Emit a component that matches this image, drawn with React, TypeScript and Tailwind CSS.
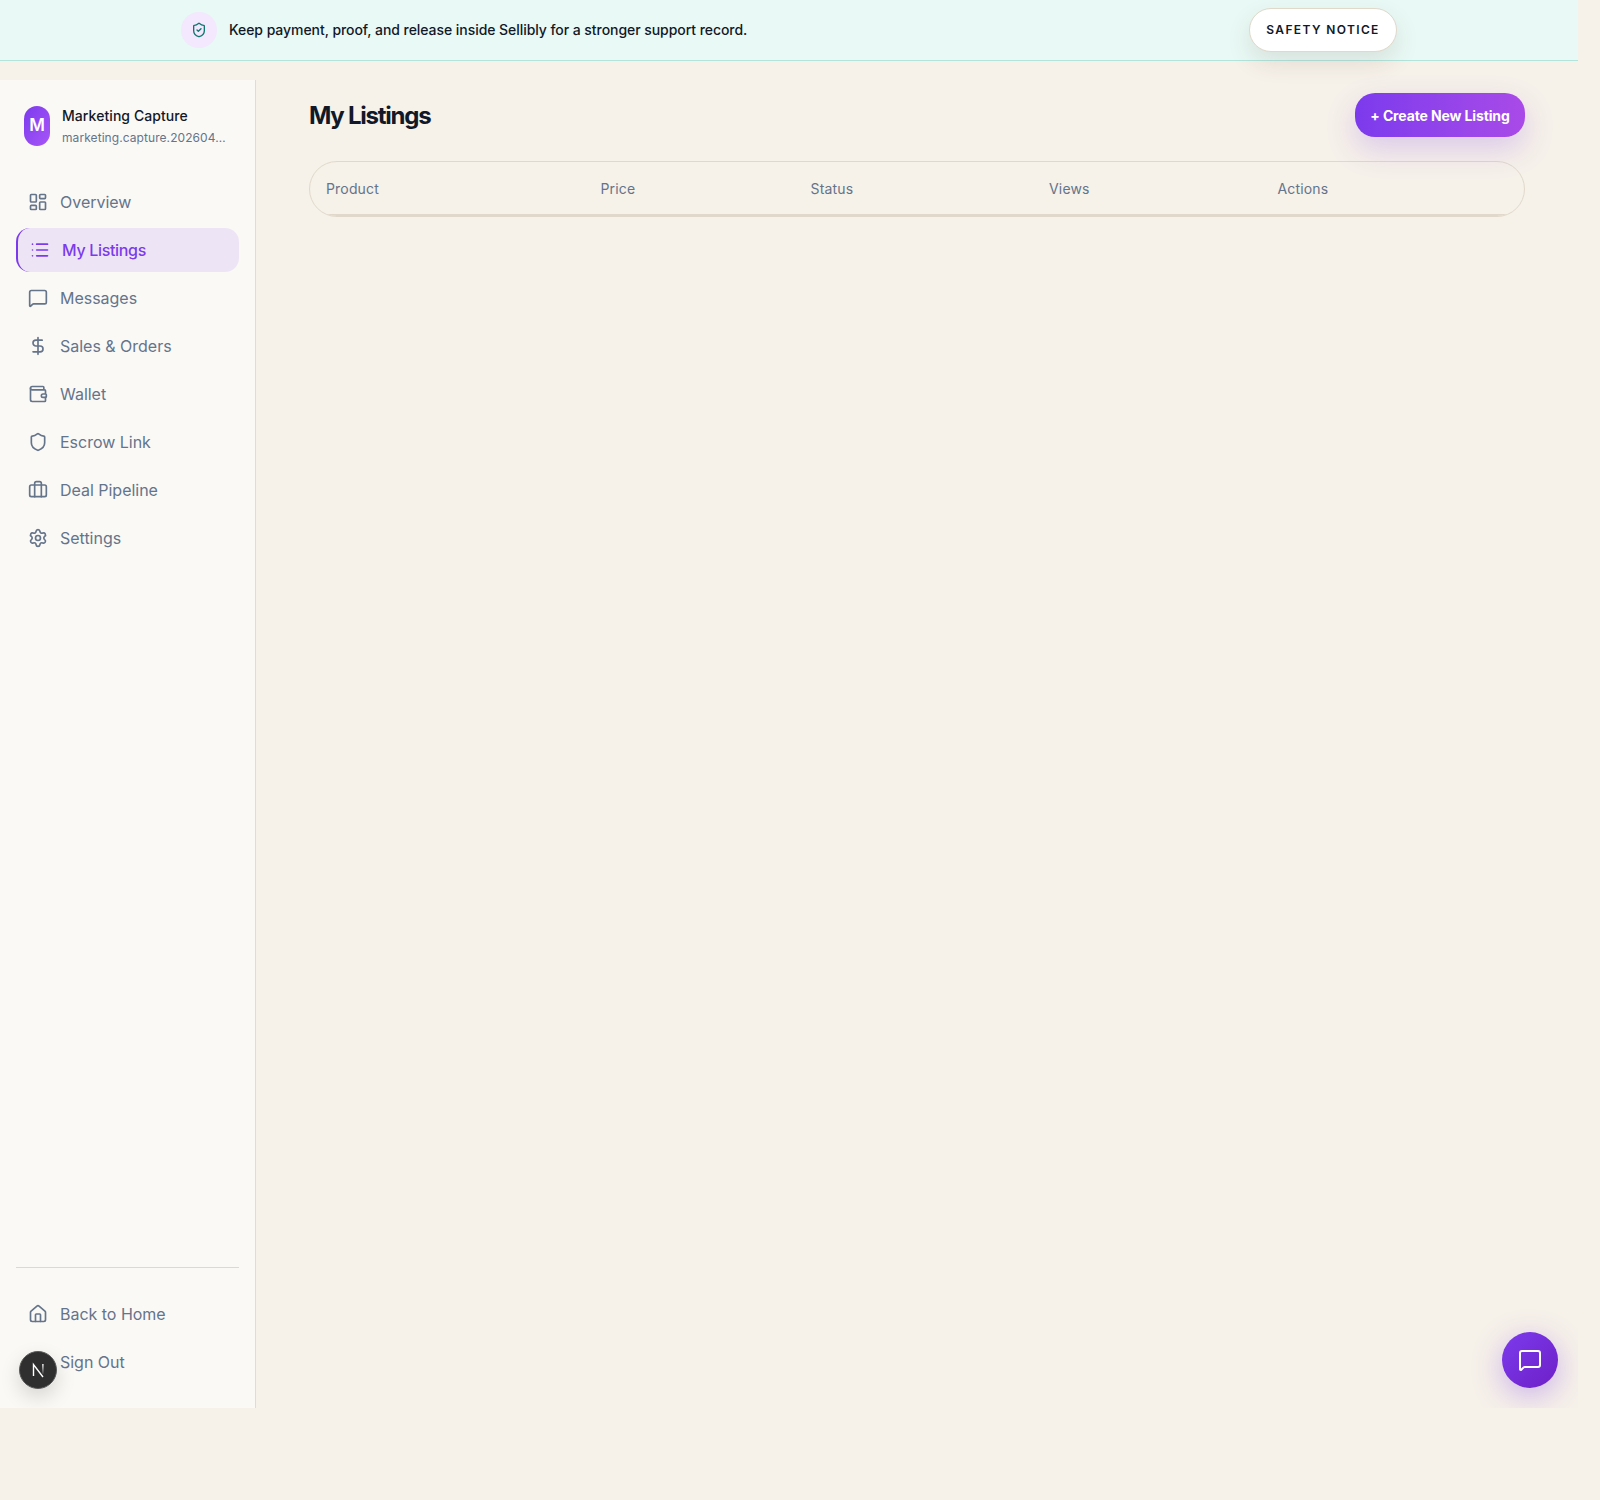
import { LayoutDashboard, List, MessageSquare, DollarSign, Wallet, Shield, Briefcase, Settings, Home, LogOut, ShieldCheck } from "lucide-react";

const font = { fontFamily: '"Inter", "Liberation Sans", sans-serif' };

const nav = [
  { label: "Overview", Icon: LayoutDashboard },
  { label: "My Listings", Icon: List, active: true },
  { label: "Messages", Icon: MessageSquare },
  { label: "Sales & Orders", Icon: DollarSign },
  { label: "Wallet", Icon: Wallet },
  { label: "Escrow Link", Icon: Shield },
  { label: "Deal Pipeline", Icon: Briefcase },
  { label: "Settings", Icon: Settings },
];

function NavItem({ label, Icon, active }: { label: string; Icon: typeof List; active?: boolean }) {
  return (
    <a
      className={
        active
          ? "flex h-[44px] items-center gap-3 rounded-[14px] border-l-2 border-[#7c3aed] bg-[#ede5f5] px-3 text-[16px] font-medium tracking-[-0.02em] text-[#7c3aed]"
          : "flex h-[44px] items-center gap-3 rounded-[14px] px-3 text-[16px] tracking-[-0.001em] text-[#64748b]"
      }
    >
      <Icon size={20} strokeWidth={2} />
      <span>{label}</span>
    </a>
  );
}

function NextBadge() {
  return (
    <div className="absolute bottom-[19px] left-[19px] h-[38px] w-[38px] rounded-full shadow-[0_8px_20px_rgba(0,0,0,0.15)]">
      <svg width="38" height="38" viewBox="0 0 38 38" fill="none">
        <defs>
          <linearGradient id="nfade" x1="0" y1="0" x2="0" y2="1">
            <stop offset="0" stopColor="#ffffff" />
            <stop offset="1" stopColor="#ffffff" stopOpacity="0.1" />
          </linearGradient>
        </defs>
        <circle cx="19" cy="19" r="18.5" fill="#2f2f2f" stroke="#5a5a5a" />
        <path d="M14.5 25V13.5L24 26" stroke="#ffffff" strokeWidth="1.4" />
        <rect x="23.2" y="13" width="1.4" height="10" fill="url(#nfade)" />
      </svg>
    </div>
  );
}

export default function App() {
  return (
    <div className="min-h-[1500px] w-full bg-[#f6f1e9]" style={font}>
      <div className="relative flex h-[1408px] w-[1578px] flex-col overflow-hidden">
        <div className="h-[61px] shrink-0 border-b border-[#b2e4dc] bg-[#e9f9f5]">
          <div className="mx-auto flex h-[60px] w-[1216px] items-center justify-between">
            <div className="flex items-center gap-3">
              <div className="flex h-9 w-9 items-center justify-center rounded-full bg-[#f3e8fd] text-[#0f766e]">
                <ShieldCheck size={16} />
              </div>
              <span className="relative -top-px text-[14px] font-medium tracking-[-0.004em] text-[#111827]">
                Keep payment, proof, and release inside Sellibly for a stronger support record.
              </span>
            </div>
            <button className="relative z-10 flex h-[44px] w-[148px] items-center justify-center rounded-full border border-[#e0d8cb] bg-white text-[12px] font-semibold tracking-[0.114em] text-[#111827] shadow-[0_10px_24px_rgba(80,60,40,0.12)]">
              SAFETY NOTICE
            </button>
          </div>
        </div>
        <div className="mt-[19px] flex min-h-0 flex-1">
          <aside className="flex w-[256px] shrink-0 flex-col border-r border-[#e0dcd3] bg-[#fbf9f5] px-4">
            <div className="mt-[26px] flex items-start gap-3 pl-2">
              <div className="flex h-[40px] w-[26px] items-center justify-center rounded-full bg-gradient-to-br from-[#7c3aed] to-[#a855f7] text-[17px] font-semibold text-white">
                M
              </div>
              <div>
                <div className="text-[14px] font-medium leading-[20px] tracking-[0.005em] text-[#111827]">Marketing Capture</div>
                <div className="mt-[2px] text-[12px] leading-[20px] tracking-[0.006em] text-[#64748b]">marketing.capture.202604…</div>
              </div>
            </div>
            <nav className="mt-[32px] flex flex-col gap-[4px]">
              {nav.map((n) => (
                <NavItem key={n.label} {...n} />
              ))}
            </nav>
            <div className="mt-auto mb-[24px] flex flex-col gap-[4px] border-t border-[#dcd9d2] pt-6">
              <NavItem label="Back to Home" Icon={Home} />
              <NavItem label="Sign Out" Icon={LogOut} />
            </div>
          </aside>
          <main className="min-w-0 flex-1 pl-[53px] pr-[53px] pt-[13px]">
            <div className="flex h-[44px] items-center justify-between">
              <h1 className="relative top-px text-[24px] font-bold tracking-[-0.052em] text-[#111827]">My Listings</h1>
              <button className="flex h-[44px] w-[170px] items-center justify-center rounded-[20px] bg-gradient-to-r from-[#7c3aed] to-[#a94ae8] text-[14px] font-bold tracking-[-0.009em] text-white shadow-[0_12px_30px_rgba(124,58,237,0.22)]">
                + Create New Listing
              </button>
            </div>
            <div className="mt-[24px] h-[56px] overflow-hidden rounded-[28px] border border-[#e0d9cb]">
              <div className="grid h-[54px] grid-cols-[274.5px_210px_238.5px_228.5px_1fr] items-center border-b-2 border-[#e0d9cb] text-[14px] tracking-[0.012em] text-[#64748b]">
                <span className="pl-4">Product</span>
                <span className="pl-4">Price</span>
                <span className="pl-4">Status</span>
                <span className="pl-4">Views</span>
                <span className="pl-4">Actions</span>
              </div>
            </div>
          </main>
        </div>
        <NextBadge />
        <button className="absolute bottom-[20px] right-[20px] flex h-[56px] w-[56px] items-center justify-center rounded-full bg-gradient-to-br from-[#7c3aed] to-[#6d1fc7] text-white shadow-[0_8px_30px_rgba(124,58,237,0.35)]">
          <MessageSquare size={24} />
        </button>
      </div>
    </div>
  );
}
